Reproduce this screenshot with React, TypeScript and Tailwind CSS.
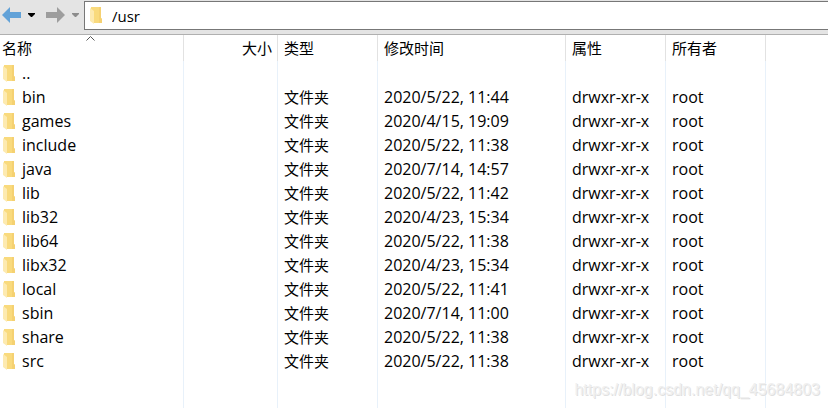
import { useState } from "react";

type Entry = {
  name: string;
  kind: string;
  modified: string;
  mode: string;
  owner: string;
};

const folder = (name: string, modified: string): Entry => ({
  name,
  kind: "文件夹",
  modified,
  mode: "drwxr-xr-x",
  owner: "root",
});

const entries: Entry[] = [
  { name: "..", kind: "", modified: "", mode: "", owner: "" },
  folder("bin", "2020/5/22, 11:44"),
  folder("games", "2020/4/15, 19:09"),
  folder("include", "2020/5/22, 11:38"),
  folder("java", "2020/7/14, 14:57"),
  folder("lib", "2020/5/22, 11:42"),
  folder("lib32", "2020/4/23, 15:34"),
  folder("lib64", "2020/5/22, 11:38"),
  folder("libx32", "2020/4/23, 15:34"),
  folder("local", "2020/5/22, 11:41"),
  folder("sbin", "2020/7/14, 11:00"),
  folder("share", "2020/5/22, 11:38"),
  folder("src", "2020/5/22, 11:38"),
];

const headCell = "h-[26px] border-r border-[#e2e2e2] p-0 pl-1.5 font-normal";
const bodyCell = "h-6 border-r border-[#e8f1fa] p-0 pl-1.5";
const latinCell = "h-6 border-r border-[#e8f1fa] p-0 pl-1.5 text-[16px] leading-5";
const fillCell = "border-r border-[#e8f1fa] p-0";

function FolderIcon() {
  return (
    <svg width="12" height="17" viewBox="0 0 12 17" className="shrink-0" aria-hidden="true">
      <path d="M1 0H11V11L12 12V16H4L1 14Z" fill="#f9da7d" />
      <path d="M9 0H11V11L12 12V16H9Z" fill="#f5d172" />
      <path d="M0 1L4 4V17L0 14Z" fill="#fdeab0" />
    </svg>
  );
}

function ArrowIcon({ back }: { back?: boolean }) {
  return (
    <svg width="20" height="16" viewBox="0 0 20 16" aria-hidden="true">
      {back ? (
        <path d="M0 8L8 0V5H19V11H8V16Z" fill="#62a2d8" />
      ) : (
        <path d="M19 8L11 0V5H0V11H11V16Z" fill="#9d9d9d" />
      )}
    </svg>
  );
}

function Caret({ className }: { className: string }) {
  return (
    <svg width="7" height="4" viewBox="0 0 7 4" className={className} aria-hidden="true">
      <path d="M0 0H7V1L4 4H3L0 1Z" fill="currentColor" />
    </svg>
  );
}

function Toolbar() {
  const [path, setPath] = useState("/usr");
  return (
    <header className="flex h-[35px] items-start border-b border-[#b0b0b0] bg-[#e4e4e4] pt-px">
      <div className="flex h-7 w-[84px] shrink-0 items-center pl-0.5">
        <button type="button" aria-label="后退" className="w-[26px]">
          <ArrowIcon back />
        </button>
        <button type="button" aria-label="后退历史" className="w-[18px]">
          <Caret className="text-black" />
        </button>
        <button type="button" aria-label="前进" className="w-[26px]">
          <ArrowIcon />
        </button>
        <button type="button" aria-label="前进历史">
          <Caret className="text-[#8c8c8c]" />
        </button>
      </div>
      <label className="flex h-[29px] min-w-0 flex-1 items-center gap-2.5 border border-r-0 border-[#777777] bg-white pl-[5px]">
        <FolderIcon />
        <input
          aria-label="路径"
          value={path}
          onChange={(e) => setPath(e.target.value)}
          className="min-w-0 flex-1 bg-transparent outline-none"
        />
      </label>
    </header>
  );
}

function FileTable() {
  return (
    <table className="h-full w-full table-fixed border-separate border-spacing-0 text-left whitespace-nowrap">
      <colgroup>
        <col className="w-[184px]" />
        <col className="w-[94px]" />
        <col className="w-[100px]" />
        <col className="w-[188px]" />
        <col className="w-[100px]" />
        <col className="w-[100px]" />
        <col />
      </colgroup>
      <thead>
        <tr>
          <th aria-sort="ascending" className="relative h-[26px] border-r border-[#e2e2e2] p-0 pl-0.5 font-normal">
            名称
            <svg
              width="9"
              height="5"
              viewBox="0 0 9 5"
              className="absolute top-px left-[86px]"
              aria-hidden="true"
            >
              <path d="M0.5 4.5L4.5 0.5L8.5 4.5" fill="none" stroke="#555555" />
            </svg>
          </th>
          <th className="h-[26px] border-r border-[#e2e2e2] p-0 pr-[5px] text-right font-normal">大小</th>
          <th className={headCell}>类型</th>
          <th className={headCell}>修改时间</th>
          <th className={headCell}>属性</th>
          <th className={headCell}>所有者</th>
          <td className="p-0" />
        </tr>
      </thead>
      <tbody>
        {entries.map((entry) => (
          <tr key={entry.name}>
            <td className="h-6 border-r border-[#e8f1fa] p-0 pl-[3px] text-[16px] leading-5">
              <div className="flex items-center gap-[7px]">
                <FolderIcon />
                {entry.name}
              </div>
            </td>
            <td className={bodyCell} />
            <td className={bodyCell}>{entry.kind}</td>
            <td className={latinCell}>{entry.modified}</td>
            <td className={latinCell}>{entry.mode}</td>
            <td className={latinCell}>{entry.owner}</td>
            <td className="p-0" />
          </tr>
        ))}
        <tr>
          <td className={fillCell} />
          <td className={fillCell} />
          <td className={fillCell} />
          <td className={fillCell} />
          <td className={fillCell} />
          <td className={fillCell} />
          <td className="p-0" />
        </tr>
      </tbody>
    </table>
  );
}

export default function App() {
  return (
    <div className="relative h-screen overflow-hidden bg-white font-['Open_Sans','Noto_Sans_CJK_SC',sans-serif] text-[15px] leading-5 text-black">
      <Toolbar />
      <main className="h-[calc(100vh-35px)]">
        <FileTable />
      </main>
      <div className="pointer-events-none absolute right-2 bottom-2 font-['Liberation_Sans',sans-serif] text-[16px] leading-5 text-[#f0f0f0] [text-shadow:1px_1px_0_#e0e0e0]">
        https://blog.csdn.net/qq_45684803
      </div>
    </div>
  );
}
